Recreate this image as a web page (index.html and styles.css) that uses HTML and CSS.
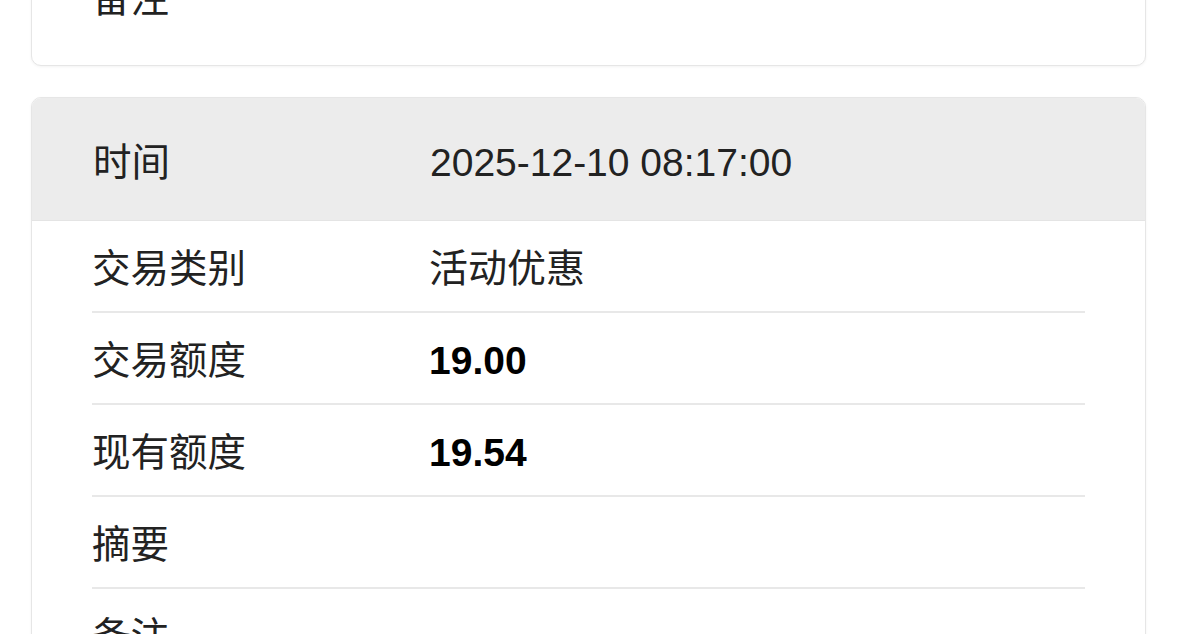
FILE: index.html
```html
<!DOCTYPE html>
<html lang="zh-CN">
<head>
<meta charset="utf-8">
<title>交易详情</title>
<link rel="stylesheet" href="styles.css">
</head>
<body>
<div class="page">
  <section class="card card-prev">
    <div class="row row-last">
      <div class="label">备注</div>
      <div class="value"></div>
    </div>
  </section>

  <section class="card">
    <div class="head">
      <div class="label">时间</div>
      <div class="value">2025-12-10 08:17:00</div>
    </div>
    <div class="row">
      <div class="label">交易类别</div>
      <div class="value">活动优惠</div>
    </div>
    <div class="row">
      <div class="label">交易额度</div>
      <div class="value strong">19.00</div>
    </div>
    <div class="row">
      <div class="label">现有额度</div>
      <div class="value strong">19.54</div>
    </div>
    <div class="row">
      <div class="label">摘要</div>
      <div class="value"></div>
    </div>
    <div class="row row-last">
      <div class="label">备注</div>
      <div class="value"></div>
    </div>
  </section>
</div>
</body>
</html>
```

FILE: styles.css
```css
* { box-sizing: border-box; }

html, body {
  margin: 0;
  padding: 0;
  background: #ffffff;
}

body {
  font-family: "Liberation Sans", "Noto Sans CJK SC", sans-serif;
  font-size: 38px;
  line-height: 38px;
  color: #222222;
  overflow: hidden;
}

.page {
  margin-top: -50px;
  padding: 0 31px;
  display: flex;
  flex-direction: column;
  gap: 31px;
}

.card {
  background: #ffffff;
  border: 1px solid #e6e6e6;
  border-radius: 10px;
  box-shadow: 0 1px 3px rgba(0, 0, 0, 0.05);
  overflow: hidden;
}

.card-prev {
  padding-bottom: 24px;
}

.head {
  display: flex;
  background: #ececec;
  padding: 46px 61px 38px;
  border-bottom: 1px solid #e4e4e4;
}

.row {
  display: flex;
  margin: 0 60px;
  padding: 29px 0 23px;
  border-bottom: 2px solid #e8e8e8;
}

.row-last {
  border-bottom: none;
}

.head .label,
.row .label {
  width: 337px;
  flex: none;
  font-size: 38.5px;
}

.value {
  flex: 1;
  color: #222222;
  font-size: 39px;
}

.strong {
  font-weight: 700;
  color: #000000;
}
```
